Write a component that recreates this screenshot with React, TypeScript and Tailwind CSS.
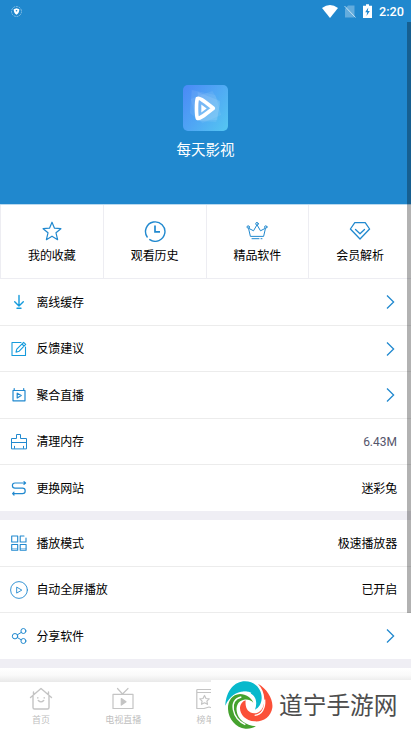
import type { ReactNode } from 'react';

const FONT = "font-['Roboto','Noto_Sans_CJK_SC',sans-serif]";

function Icon({ size = 18, box = 18, w = 1, color = '#2189cf', children }: { size?: number; box?: number; w?: number; color?: string; children: ReactNode }) {
  return (
    <svg width={size} height={size} viewBox={`0 0 ${box} ${box}`} fill="none" stroke={color} strokeWidth={w} strokeLinecap="round" strokeLinejoin="round" className="block shrink-0">
      {children}
    </svg>
  );
}

const star = (
  <Icon size={22} box={22} w={1.2}>
    <path d="M11 2.200l2.500 6 6.400.5-4.900 4.100 1.600 6.900L11 16.200l-5.600 3.500L7 12.800 2.100 8.700l6.400-.5z" />
  </Icon>
);
const clock = (
  <Icon size={22} box={22} w={1.4}>
    <path d="M3.200 17A9.700 9.700 0 1 1 5.800 19.600" />
    <path d="M11 5.500v6.300h5" strokeLinecap="butt" strokeLinejoin="miter" strokeWidth={1.7} />
  </Icon>
);
const crown = (
  <Icon size={22} box={22} w={1}>
    <path d="M4.300 16L2.500 8.200l5 2.600L11 4.800l3.500 6 5-2.600L17.700 16z" />
    <circle cx="11" cy="3.8" r="1.3" fill="#fff" />
    <circle cx="2.2" cy="7" r="1.2" fill="#fff" />
    <circle cx="19.8" cy="7" r="1.2" fill="#fff" />
    <path d="M6 18.700h7M15 18.700h1" />
  </Icon>
);
const gem = (
  <Icon size={22} box={22} w={1.3}>
    <path d="M5.800 2.700h10.400L20.600 9 11 19 1.400 9z" />
    <path d="M6.500 9.500L11 13.700l4.500-4.200" />
  </Icon>
);

const download = (
  <Icon w={1.4} color="#159bdc">
    <path d="M9 2.500v10.300M4.700 8.800L9 13l4.300-4.200M7 15.300h4" />
  </Icon>
);
const edit = (
  <Icon w={1.1} color="#159bdc">
    <path d="M11 2.500H2v13h13.500V7" />
    <path d="M13.600 2.300l2.100 2L9 11.300l-3 .9.8-3zM12 4l2 2" />
  </Icon>
);
const live = (
  <Icon w={1.2}>
    <path d="M3 4.500h12v10.300H3zM4.200 2.500v2M13.700 2.500v2" />
    <path d="M7.200 7.200l4 2.400-4 2.400z" />
  </Icon>
);
const clean = (
  <Icon>
    <path d="M1.500 15.500V5.500h5V1.500h4v4h6v10zM1.500 9.500h15M4.500 15.300v-2M13.500 15.300v-2" />
  </Icon>
);
const swap = (
  <Icon w={1.2}>
    <path d="M15.500 4H5a2.600 2.600 0 0 0 0 5.200h7.500a2.700 2.700 0 0 1 0 5.400H2.700M14 2.600L15.600 4 14 5.300M4 13.200l-1.400 1.400L4 16" />
  </Icon>
);
const grid = (
  <Icon w={1.1}>
    <path d="M1.700 2h6v6h-6zM1.700 10.500h6v5.700h-6zM10.200 10.500h5.900v5.700h-5.900zM14 2h-3.800v6H16V4" />
    <path d="M2 14.800h5.400M10.500 14.800h5.300" strokeOpacity=".6" />
  </Icon>
);
const play = (
  <Icon w={0.9}>
    <circle cx="9" cy="9" r="8.4" />
    <path d="M7 6.300l4.800 2.800L7 11.900z" />
  </Icon>
);
const share = (
  <Icon w={1}>
    <circle cx="5" cy="9.2" r="2.7" />
    <circle cx="13.4" cy="4" r="2.5" />
    <circle cx="13.4" cy="14" r="2.5" />
    <path d="M7.400 7.800l3.800-2.400M7.400 10.600l3.800 2.200" />
  </Icon>
);

function Chevron() {
  return (
    <svg width="9" height="16" viewBox="0 0 9 16" fill="none" stroke="#2189cf" strokeWidth="1.3" className="mr-0.5">
      <path d="M1 1.500L7.600 8 1 14.500" />
    </svg>
  );
}

function Tile({ icon, label }: { icon: ReactNode; label: string }) {
  return (
    <div className="flex flex-1 flex-col items-center border-l border-[#ededf2] pt-[15px]">
      {icon}
      <span className="mt-[5px] text-[12px] leading-[18px] tracking-[-.1px]">{label}</span>
    </div>
  );
}

function Row({ icon, label, value, muted, tall, last }: { icon: ReactNode; label: string; value?: string; muted?: boolean; tall?: boolean; last?: boolean }) {
  return (
    <div className={`flex items-center bg-white pr-3.5 pl-[9.5px] ${tall ? 'h-[47px]' : 'h-[46px]'} ${last ? '' : 'border-b border-[#ececec]'}`}>
      {icon}
      <span className="ml-[9px] flex-1 pt-px text-[12px] leading-[18px] tracking-[-.15px]">{label}</span>
      {value ? (
        <span className={`pt-px text-[12px] leading-[18px] ${muted ? 'text-[#55556b]' : 'tracking-[-.15px]'}`}>{value}</span>
      ) : (
        <Chevron />
      )}
    </div>
  );
}

function Tab({ icon, label }: { icon: ReactNode; label: string }) {
  return (
    <div className="flex w-[82.2px] shrink-0 flex-col items-center pt-[5px] text-[#c0c0c0]">
      {icon}
      <span className="mt-[3px] text-[9px] leading-[13px]">{label}</span>
    </div>
  );
}

export default function App() {
  return (
    <div className={`relative flex h-[730px] w-[411px] flex-col overflow-hidden bg-white text-black ${FONT}`}>
      <header className="flex h-[204px] shrink-0 flex-col bg-[#2088ce]">
        <div className="flex h-[22px] items-center justify-between pr-[7px] pl-[11px] text-white">
          <svg width="11" height="11" viewBox="0 0 11 11">
            <circle cx="5.5" cy="5.5" r="5" fill="none" stroke="#fff" strokeOpacity=".6" strokeWidth=".7" strokeDasharray="2 .8" />
            <path d="M5.500 2.300l2.800 1c0 2.800-.8 4.300-2.800 5.400-2-1.100-2.800-2.600-2.800-5.400z" fill="#fff" />
            <circle cx="5.5" cy="4.8" r=".8" fill="#2088ce" />
          </svg>
          <div className="flex items-center">
            <svg width="16" height="13" viewBox="0 0 16 13" className="mr-[6px]">
              <path d="M0 3Q8-3 16 3L8 13z" fill="#fff" />
            </svg>
            <svg width="12" height="13" viewBox="0 0 12 13" className="mr-[7px]">
              <path d="M4 .5h6.500v12H1V4z" fill="#fff" fillOpacity=".3" />
              <path d="M.5 1l11 11.500" stroke="#fff" strokeOpacity=".65" />
            </svg>
            <svg width="9" height="14" viewBox="0 0 9 14" className="mr-[7px]">
              <path d="M3 .3h3v1.400h3V14H0V1.700h3z" fill="#fff" />
              <path d="M5.300 3.500L2.200 8.300h2L3.500 12l3.300-5h-2z" fill="#2088ce" />
            </svg>
            <span className="pt-px text-[12.7px] leading-[22px] font-medium">2:20</span>
          </div>
        </div>
        <div className="flex flex-col items-center pt-[63px] text-white">
          <svg width="45" height="46" viewBox="0 0 46 46" preserveAspectRatio="none">
            <defs>
              <linearGradient id="logo" x1="0" y1=".15" x2="1" y2=".85">
                <stop stopColor="#4b8cf6" />
                <stop offset="1" stopColor="#54c3f2" />
              </linearGradient>
            </defs>
            <rect width="46" height="46" rx="5" fill="url(#logo)" />
            <path d="M9 5l24 5 6 20-19 8L7 28z" fill="#fff" fillOpacity=".08" />
            <path d="M8 14l22-8 8 13-4 18-20-1z" fill="#fff" fillOpacity=".08" />
            <path d="M15 7l23 9-3 19-19 1z" fill="#fff" fillOpacity=".1" />
            <path d="M14.700 13.500c1.500-1.200 5 1 16.300 9.800-11 8.500-14 10.700-16.300 10-1.200-3-1.200-16.500 0-19.800z" fill="none" stroke="#fff" strokeWidth="3.700" strokeLinejoin="round" />
            <path d="M18.700 19.500l5.500 4-5.500 4z" fill="#fff" />
          </svg>
          <div className="mt-[9px] text-[14.5px] leading-[22px]">每天影视</div>
        </div>
      </header>

      <section className="flex h-[75px] shrink-0 border-t border-b border-t-[#b9d9ef] border-b-[#ededf2] bg-white">
        <Tile icon={star} label="我的收藏" />
        <Tile icon={clock} label="观看历史" />
        <Tile icon={crown} label="精品软件" />
        <Tile icon={gem} label="会员解析" />
      </section>

      <section className="shrink-0">
        <Row icon={download} label="离线缓存" tall />
        <Row icon={edit} label="反馈建议" />
        <Row icon={live} label="聚合直播" tall />
        <Row icon={clean} label="清理内存" value="6.43M" muted />
        <Row icon={swap} label="更换网站" value="迷彩兔" last />
      </section>
      <div className="h-[9px] shrink-0 bg-[#efeef4]" />
      <section className="shrink-0">
        <Row icon={grid} label="播放模式" value="极速播放器" tall />
        <Row icon={play} label="自动全屏播放" value="已开启" />
        <Row icon={share} label="分享软件" last />
      </section>
      <div className="h-[9px] shrink-0 bg-[#efeef4]" />
      <div className="h-[14px] shrink-0 bg-linear-to-b from-white via-[#fafafa] to-[#e9e9e9]" />

      <nav className="flex flex-1 bg-white">
        <Tab
          label="首页"
          icon={
            <Icon size={24} box={24} w={1.4} color="#c4c4c4">
              <path d="M1.500 10.500L12 1.500l10.500 9M4 9v11.500q0 1.500 1.500 1.500h13q1.500 0 1.500-1.500V9M4.500 7V5M19.500 7V5" />
              <path d="M9.300 13.500q2.700 2.700 5.400 0M8.800 10.600v.5M15.200 10.600v.5" />
            </Icon>
          }
        />
        <Tab
          label="电视直播"
          icon={
            <Icon size={24} box={24} w={1.2} color="#c4c4c4">
              <path d="M2 7.300h20v14.200H2zM6.500 1.500l5 5.500 5.500-5.500" />
              <path d="M10.300 11.500l4.700 3.300-4.700 3.300z" fill="#c4c4c4" />
            </Icon>
          }
        />
        <Tab
          label="榜单"
          icon={
            <Icon size={24} box={24} w={1.2} color="#c4c4c4">
              <path d="M4 2.500h17v19l-5-1.500-5 1.500H3.800V3M4 5.500h17" />
              <path d="M11.500 8.500l1.500 3 3.200.4-2.300 2.200.6 3.200-3-1.500-3 1.500.6-3.200-2.300-2.200 3.200-.4z" />
            </Icon>
          }
        />
      </nav>

      <div className="absolute top-[22px] right-0 h-[591px] w-1 bg-black/30" />

      <div className="absolute top-[680px] left-[211px] flex h-[50px] w-[200px] items-center bg-white pl-[13px]">
        <svg width="50" height="50" viewBox="85 90 150 150" className="shrink-0">
          <path d="M89 167C91 122 117 94 148 94c30 0 51 24 50 51-1 18-9 29-20 34 8-22 3-43-17-51-25-10-56 3-72 39z" fill="#08b9cc" />
          <path d="M111 149c13-19 36-27 55-19" fill="none" stroke="#fff" strokeWidth="4" />
          <path d="M187 101c28 16 46 47 43 72-4 28-29 43-53 41-28-2-45-22-44-42 1-10 7-18 17-21-3 25 9 38 25 39 19 0 32-18 31-43-1-18-7-33-19-46z" fill="#fb5038" />
          <path d="M207 149c2 24-8 46-30 47" fill="none" stroke="#fff" strokeWidth="4" />
          <path d="M173 158c-6-15-22-26-40-26-23 1-37 20-36 45 1 30 24 57 52 59 12 1 23-2 32-7-32-2-55-22-58-46-2-19 7-32 22-34 11-2 21 2 28 9z" fill="#45a22e" />
          <path d="M137 141c-20 5-27 20-24 38 4 22 18 37 36 45" fill="none" stroke="#fff" strokeWidth="4" />
        </svg>
        <span className="mt-px ml-[5px] text-[23.7px] leading-[50px] font-normal whitespace-nowrap text-[#4d4d4d]">道宁手游网</span>
      </div>
    </div>
  );
}
